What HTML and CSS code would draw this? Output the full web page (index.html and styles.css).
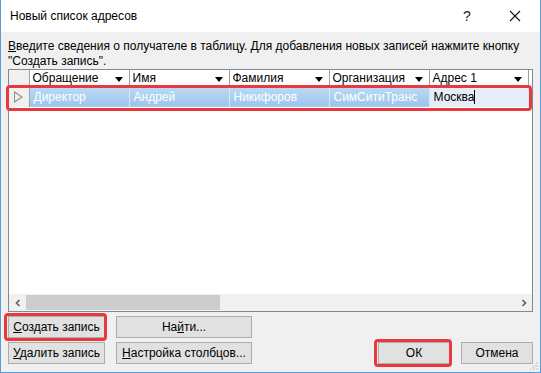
FILE: index.html
```html
<!DOCTYPE html>
<html lang="ru">
<head>
    <meta charset="UTF-8">
    <title>Новый список адресов</title>
    <link rel="stylesheet" href="styles.css">
</head>
<body>
    <div class="window">
        <div class="titlebar">
            <span class="title">Новый список адресов</span>
            <span class="tb-help">?</span>
            <span class="tb-close">
                <svg width="12" height="12" viewBox="0 0 12 12"><path d="M1 1L11 11M11 1L1 11" stroke="#111" stroke-width="1.1" fill="none"/></svg>
            </span>
        </div>

        <div class="content">
            <p class="intro"><u>В</u>ведите сведения о получателе в таблицу. Для добавления новых записей нажмите кнопку<br>"Создать запись".</p>

            <div class="grid">
                <div class="grid-body">
                    <table class="records">
                        <colgroup>
                            <col class="c-head"><col class="c-100"><col class="c-100"><col class="c-100"><col class="c-100"><col class="c-99">
                        </colgroup>
                        <thead>
                            <tr>
                                <th class="corner"></th>
                                <th>Обращение<span class="caret"></span></th>
                                <th>Имя<span class="caret"></span></th>
                                <th>Фамилия<span class="caret"></span></th>
                                <th>Организация<span class="caret"></span></th>
                                <th>Адрес 1<span class="caret"></span></th>
                            </tr>
                        </thead>
                        <tbody>
                            <tr class="selected">
                                <td class="row-head"><span class="row-arrow"></span></td>
                                <td>Директор</td>
                                <td>Андрей</td>
                                <td>Никифоров</td>
                                <td>СимСитиТранс</td>
                                <td class="editing">Москва<span class="cursor"></span></td>
                            </tr>
                        </tbody>
                    </table>
                    <div class="row-mark"></div>
                </div>
                <div class="hscroll">
                    <span class="arrow">
                        <svg width="8" height="8" viewBox="0 0 8 8"><path d="M5.5 1L2.5 4L5.5 7" stroke="#606060" stroke-width="1.6" fill="none"/></svg>
                    </span>
                    <span class="track"><span class="thumb"></span></span>
                    <span class="arrow">
                        <svg width="8" height="8" viewBox="0 0 8 8"><path d="M2.5 1L5.5 4L2.5 7" stroke="#606060" stroke-width="1.6" fill="none"/></svg>
                    </span>
                </div>
            </div>

            <div class="footer">
                <div class="btn-grid">
                    <button class="btn btn-short marked"><u>С</u>оздать запись</button>
                    <button class="btn btn-long">На<u>й</u>ти...</button>
                    <button class="btn btn-short"><u>У</u>далить запись</button>
                    <button class="btn btn-long"><u>Н</u>астройка столбцов...</button>
                </div>
                <div class="dialog-buttons">
                    <button class="btn btn-dialog marked">ОК</button>
                    <button class="btn btn-dialog">Отмена</button>
                </div>
            </div>
        </div>

        <svg class="grip" width="10" height="10" viewBox="0 0 10 10">
            <path d="M9 1L1 9M9 4L4 9M9 7L7 9" stroke="#a8a8a8" stroke-width="1" stroke-dasharray="1 1" fill="none"/>
        </svg>
    </div>
</body>
</html>
```

FILE: styles.css
```css
* {
    margin: 0;
    padding: 0;
    box-sizing: border-box;
}

body {
    font-family: 'Liberation Sans', Arial, sans-serif;
    font-size: 12px;
    color: #000;
    background: #f0f0f0;
}

.window {
    position: relative;
    width: 541px;
    height: 373px;
    background: #f0f0f0;
    border: 1px solid #5b9bd8;
    border-top: none;
}

.titlebar {
    display: flex;
    align-items: center;
    height: 32px;
    background: #fff;
    padding-left: 9px;
}

.title {
    flex: 1;
    font-size: 12px;
    color: #000;
}

.tb-help {
    width: 14px;
    font-size: 14px;
    color: #222;
    margin-right: 32px;
}

.tb-close {
    display: flex;
    margin-right: 19px;
}

.content {
    padding: 7px 7px 0 7px;
}

.intro {
    line-height: 15px;
    height: 30px;
}

.grid {
    display: flex;
    flex-direction: column;
    height: 243px;
    border: 1px solid #828790;
    background: #fff;
}

.grid-body {
    position: relative;
    flex: 1;
    background: #fff;
}

.records {
    border-collapse: collapse;
    table-layout: fixed;
    width: 519px;
}

.c-head { width: 20px; }
.c-100 { width: 100px; }
.c-99 { width: 99px; }

.records th {
    position: relative;
    height: 17px;
    padding: 0 0 0 3px;
    text-align: left;
    font-weight: normal;
    white-space: nowrap;
    background: #fff;
    border-right: 1px solid #a0a0a0;
    border-bottom: 1px solid #a0a0a0;
}

.records th.corner {
    background: #f0f0f0;
}

.caret {
    position: absolute;
    right: 6px;
    top: 7px;
    border-left: 4px solid transparent;
    border-right: 4px solid transparent;
    border-top: 5px solid #000;
}

.records td {
    height: 20px;
    padding: 0 0 0 4px;
    color: #fff;
    white-space: nowrap;
    border-right: 1px solid #d9e8f6;
}

.selected td {
    background: linear-gradient(#bcd9f3, #9bc5ec);
}

.selected td.row-head {
    background: #f0f0f0;
    border-right: 1px solid #a0a0a0;
    padding: 0;
}

.row-arrow {
    display: block;
    width: 0;
    height: 0;
    margin-left: 5px;
    border-top: 6px solid transparent;
    border-bottom: 6px solid transparent;
    border-left: 9px solid #8d8d8d;
    position: relative;
}

.row-arrow::after {
    content: "";
    position: absolute;
    left: -8px;
    top: -4px;
    border-top: 4px solid transparent;
    border-bottom: 4px solid transparent;
    border-left: 6px solid #f0f0f0;
}

.selected td.editing {
    background: #e4edf8;
    color: #000;
}

.cursor {
    display: inline-block;
    width: 1px;
    height: 14px;
    background: #000;
    vertical-align: -3px;
}

.row-mark {
    position: absolute;
    left: -3px;
    top: 15px;
    width: 526px;
    height: 26px;
    border: 3px solid #e8393f;
    border-radius: 4px;
}

.hscroll {
    display: flex;
    height: 17px;
    background: #f0f0f0;
}

.hscroll .arrow {
    display: flex;
    align-items: center;
    justify-content: center;
    width: 17px;
}

.track {
    flex: 1;
    display: flex;
    padding: 1px 0;
}

.thumb {
    width: 194px;
    background: #cdcdcd;
}

.footer {
    display: flex;
    align-items: flex-end;
    padding-top: 4px;
}

.btn-grid {
    display: grid;
    grid-template-columns: 97px 136px;
    column-gap: 11px;
    row-gap: 4px;
}

.btn {
    position: relative;
    height: 22px;
    font-family: 'Liberation Sans', Arial, sans-serif;
    font-size: 12px;
    color: #000;
    background: #e1e1e1;
    border: 1px solid #adadad;
}

.dialog-buttons {
    display: flex;
    gap: 11px;
    margin-left: auto;
}

.btn-dialog {
    width: 72px;
}

.marked::after {
    content: "";
    position: absolute;
    left: -5px;
    top: -4px;
    right: -3px;
    bottom: -4px;
    border: 3px solid #e8393f;
    border-radius: 4px;
}

.grip {
    position: absolute;
    right: 1px;
    bottom: 1px;
}
```
